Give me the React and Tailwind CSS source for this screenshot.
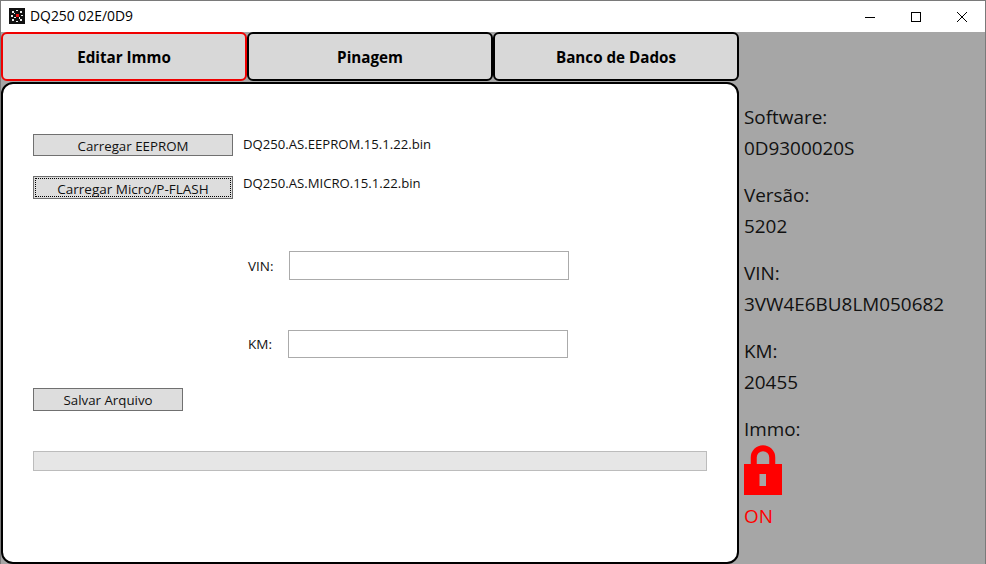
const FONT = "font-['Open_Sans','Noto_Sans',sans-serif]";

const AppIcon = () => (
  <svg width="16" height="16" viewBox="0 0 16 16" className="shrink-0">
    <rect width="16" height="16" fill="#111" />
    <g fill="#eee">
      <rect x="3" y="3" width="2" height="2" />
      <rect x="7" y="2" width="2" height="1" />
      <rect x="11" y="3" width="2" height="2" />
      <rect x="2" y="7" width="2" height="2" />
      <rect x="12" y="7" width="2" height="1" />
      <rect x="3" y="11" width="2" height="2" />
      <rect x="7" y="13" width="2" height="1" />
      <rect x="11" y="11" width="2" height="2" />
      <rect x="5" y="5" width="1" height="1" />
      <rect x="10" y="9" width="1" height="2" />
      <rect x="5" y="9" width="2" height="1" />
    </g>
    <rect x="7" y="6" width="3" height="3" fill="#e11" />
  </svg>
);

const WindowControls = () => (
  <div className="flex h-full items-center">
    <button className="flex h-full w-[46px] items-center justify-center">
      <svg width="10" height="10" viewBox="0 0 10 10"><path d="M0 5.5H10" stroke="#000" /></svg>
    </button>
    <button className="flex h-full w-[46px] items-center justify-center">
      <svg width="10" height="10" viewBox="0 0 10 10"><rect x="0.5" y="0.5" width="9" height="9" fill="none" stroke="#000" /></svg>
    </button>
    <button className="flex h-full w-[46px] items-center justify-center">
      <svg width="10" height="10" viewBox="0 0 10 10"><path d="M0 0L10 10M10 0L0 10" stroke="#000" strokeWidth="1" /></svg>
    </button>
  </div>
);

const Tab = ({ label, active }) => (
  <button
    className={`flex h-[49px] w-[246px] items-center justify-center rounded-[6px] border-2 bg-[#d8d8d8] pt-[2px] text-[15.2px] font-bold text-black ${active ? "border-[#f00000]" : "border-black"}`}
  >
    {label}
  </button>
);

const FlatButton = ({ label, className = "", focused, textClass = "pt-[2px] text-[13.3px]" }) => (
  <button className={`relative flex shrink-0 items-center justify-center border border-[#707070] bg-[#dddddd] leading-none text-[#111] ${className}`}>
    {focused && <span className="absolute inset-px border border-dotted border-black" />}
    <span className={textClass}>{label}</span>
  </button>
);

const Field = ({ label, className = "", labelWidth, labelClass = "" }) => (
  <div className={`flex items-center ${className}`}>
    <span className={`text-[13.5px] text-[#111] ${labelWidth} ${labelClass}`}>{label}</span>
    <input className="h-full w-[280px] border border-[#ababab] bg-white outline-none" />
  </div>
);

const Info = ({ label, value }) => (
  <div className="mb-[16px]">
    <div className="h-[31px] leading-[31px]">{label}</div>
    <div className="h-[31px] leading-[31px]">{value}</div>
  </div>
);

export default function App() {
  return (
    <div className={`flex h-[564px] w-[986px] flex-col overflow-hidden border border-b-0 border-[#7a7a7a] bg-[#a6a6a6] ${FONT}`}>
      <div className="flex h-[31px] shrink-0 items-center justify-between bg-white pl-2">
        <div className="flex items-center gap-[5px]">
          <AppIcon />
          <span className="text-[13.9px] text-black">DQ250 02E/0D9</span>
        </div>
        <WindowControls />
      </div>

      <div className="flex min-h-0 flex-1">
        <div className="flex w-[738px] shrink-0 flex-col">
          <div className="flex">
            <Tab label="Editar Immo" active />
            <Tab label="Pinagem" />
            <Tab label="Banco de Dados" />
          </div>

          <div className="mt-px flex min-h-0 flex-1 flex-col rounded-[12px] border-2 border-black bg-white pl-[30px] pt-[50px]">
            <div className="flex items-start">
              <FlatButton label="Carregar EEPROM" textClass="pt-[4px] text-[13.3px]" className="h-[22px] w-[200px]" />
              <span className="ml-[10px] text-[13.15px] leading-[20px] text-[#111]">DQ250.AS.EEPROM.15.1.22.bin</span>
            </div>
            <div className="mt-[20px] flex items-start">
              <FlatButton label="Carregar Micro/P-FLASH" textClass="pt-[4px] text-[13.5px]" focused className="h-[23px] w-[200px]" />
              <span className="ml-[10px] text-[13.15px] leading-[14px] text-[#111]">DQ250.AS.MICRO.15.1.22.bin</span>
            </div>
            <Field label="VIN:" labelWidth="w-[41px]" labelClass="pt-[2px]" className="ml-[215px] mt-[52px] h-[29px]" />
            <Field label="KM:" labelWidth="w-[40px]" className="ml-[215px] mt-[50px] h-[28px]" />
            <FlatButton label="Salvar Arquivo" className="mt-[30px] h-[23px] w-[150px]" />
            <div className="mt-[40px] h-[20px] w-[674px] border border-[#bcbcbc] bg-[#e6e6e6]" />
          </div>
        </div>

        <div className="flex-1 pl-[5px] pt-[70px] text-[18.9px] text-[#111]">
          <Info label="Software:" value="0D9300020S" />
          <Info label="Versão:" value="5202" />
          <Info label="VIN:" value="3VW4E6BU8LM050682" />
          <Info label="KM:" value="20455" />
          <div className="h-[31px] leading-[31px]">Immo:</div>
          <svg width="38" height="50" viewBox="0 0 38 50" className="block">
            <path d="M9.75 20V12.5a9.25 9.25 0 0 1 18.5 0V20" fill="none" stroke="#ff0000" strokeWidth="6" />
            <path fillRule="evenodd" fill="#ff0000" d="M0 19H38V50H0ZM15.5 29V41H22V29Z" />
          </svg>
          <div className="mt-[6px] leading-[31px] text-[#ff0000]">ON</div>
        </div>
      </div>
    </div>
  );
}
